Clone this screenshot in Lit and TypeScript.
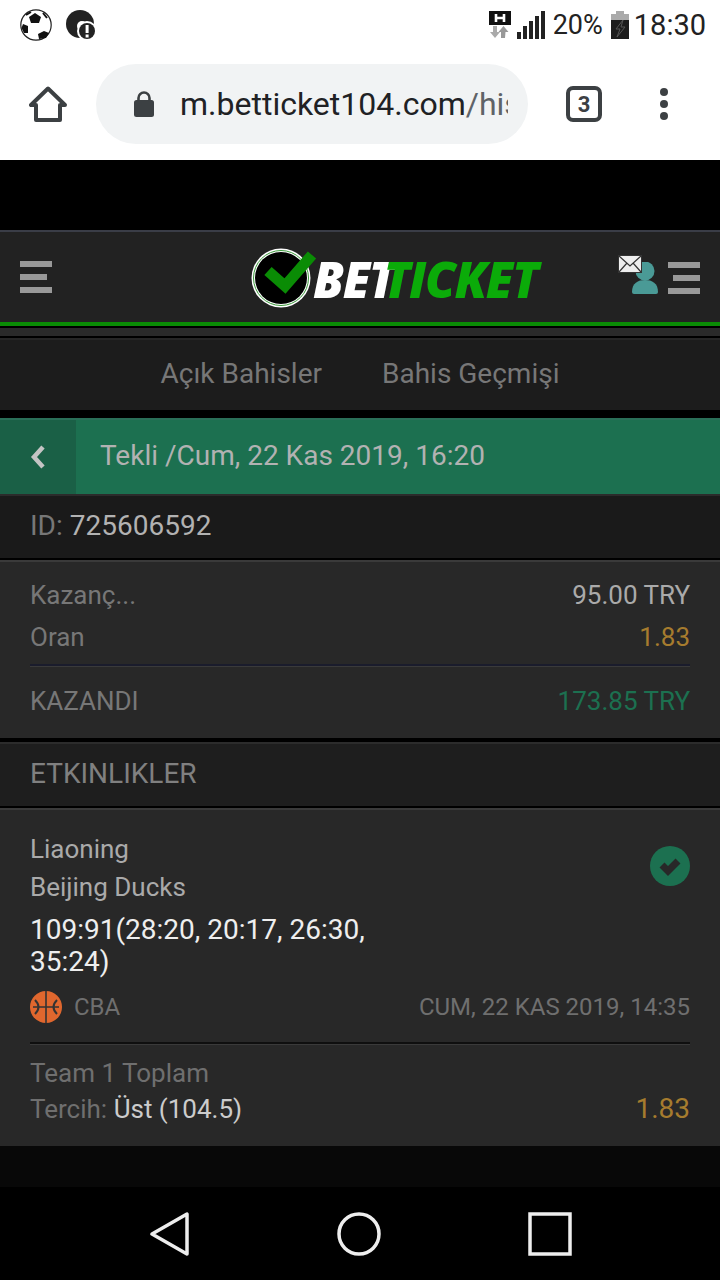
import { LitElement, html, css } from 'lit';
import { customElement } from 'lit/decorators.js';

const burger = (flip: boolean) => html`
  <svg class="burger" width="32" height="32" viewBox="0 0 32 32">
    <rect x="0" y="0" width="32" height="6" fill="#999"></rect>
    <rect x="${flip ? 5 : 0}" y="13" width="27" height="6" fill="#999"></rect>
    <rect x="0" y="26" width="32" height="6" fill="#999"></rect>
  </svg>`;

@customElement('app-root')
export class AppRoot extends LitElement {
  static styles = css`
    :host {
      display: block;
      width: 720px;
      height: 1280px;
      background: #000;
      overflow: hidden;
      font-family: Roboto, 'Liberation Sans', sans-serif;
      font-size: 26px;
      color: #777;
    }
    .status {
      height: 47px;
      padding: 1px 14px 0 20px;
      background: #fff;
      display: flex;
      align-items: center;
      color: #222;
    }
    .status .left { display: flex; gap: 14px; flex: 1; align-items: center; }
    .status .right { display: flex; align-items: center; font-size: 27px; }
    .status .pct { margin: 0 8px; }
    .status .time { margin-left: 5px; font-size: 29px; }
    .browser {
      height: 112px;
      background: #fff;
      display: flex;
      align-items: center;
    }
    .home { margin-left: 29px; width: 38px; height: 38px; }
    .url {
      margin-left: 29px;
      width: 432px;
      height: 80px;
      border-radius: 40px;
      background: #f1f3f4;
      display: flex;
      align-items: center;
      box-sizing: border-box;
      padding: 0 20px 0 37px;
    }
    .url .text {
      margin-left: 25px;
      font-size: 32px;
      color: #202124;
      white-space: nowrap;
      overflow: hidden;
      flex: 1;
    }
    .url .text span { color: #5f6368; }
    .tabs {
      margin-left: 38px;
      width: 36px;
      height: 36px;
      box-sizing: border-box;
      border: 4px solid #3c4043;
      border-radius: 7px;
      display: flex;
      align-items: center;
      justify-content: center;
      font-size: 22px;
      font-weight: 700;
      color: #3c4043;
    }
    .dots { margin-left: 58px; display: flex; flex-direction: column; gap: 4px; }
    .dots i { width: 8px; height: 8px; border-radius: 50%; background: #3c4043; display: block; }

    .gap-top { height: 70px; background: #000; }
    .topbar {
      height: 90px;
      background: #222;
      border-top: 2px solid #3a3d47;
      border-bottom: 4px solid #0a8c05;
      display: flex;
      align-items: center;
      position: relative;
    }
    .burger { display: block; }
    .topbar .l { margin-left: 20px; }
    .logo {
      position: absolute;
      left: 251px;
      top: 16px;
      display: flex;
      align-items: center;
    }
    .logo svg { overflow: visible; }
    .logo .word {
      font-family: 'Open Sans', Roboto, sans-serif;
      font-weight: 800;
      font-style: italic;
      font-size: 49px;
      line-height: 60px;
      letter-spacing: -1.4px;
      color: #0bab09;
      display: flex;
    }
    .logo .word b { color: #fff; font-weight: 800; margin-right: -11px; }
    .logo .word span { position: relative; }
    .topbar .r {
      position: absolute;
      right: 20px;
      top: 30px;
    }
    .user { position: absolute; left: 632px; top: 30px; }
    .mail { position: absolute; left: 618px; top: 23px; }

    .strip {
      height: 8px;
      background: #2a2a2a;
      border-top: 2px solid #000;
      border-bottom: 2px solid #000;
    }
    .subnav {
      height: 66px;
      padding-bottom: 4px;
      background: #1c1c1c;
      border-top: 2px solid #262626;
      display: flex;
      justify-content: center;
      align-items: center;
      gap: 60px;
      font-size: 28px;
      color: #777;
    }
    .sep8 { height: 8px; background: #000; }
    .sep4 { height: 4px; background: #000; }
    .title {
      height: 74px;
      background: #1c7050;
      border-top: 2px solid #2a6f58;
      border-bottom: 2px solid #2b2b2b;
      display: flex;
      align-items: center;
      font-size: 28px;
      color: #b2b2b2;
    }
    .title span { margin-bottom: 4px; }
    .title .back {
      width: 76px;
      height: 74px;
      background: #1a6046;
      display: flex;
      align-items: center;
      justify-content: center;
      margin-right: 24px;
    }
    .idrow {
      height: 58px;
      padding: 0 0 4px 30px;
      background: #1a1a1a;
      display: flex;
      align-items: center;
      font-size: 28px;
      border-bottom: 2px solid #000;
    }
    .idrow b { font-weight: 400; color: #b2b2b2; margin-left: 7px; }
    .summary {
      background: #282828;
      border-top: 2px solid #3a3a3a;
      padding: 0 30px;
      height: 178px;
      box-sizing: border-box;
    }
    .line {
      display: flex;
      justify-content: space-between;
      align-items: center;
      font-size: 26px;
    }
    .line .v { color: #aaa; }
    .line .gold { color: #a67c2e; }
    .line .green { color: #1c7050; }
    .summary .l1 { height: 42px; margin-top: 12px; }
    .summary .l2 { height: 42px; }
    .summary .divider { margin-top: 6px; background: #1a1c2c; }
    .divider { height: 2px; background: #0f0f0f; border-bottom: 1px solid #3a3a3a; }
    .summary .l3 { height: 68px; }
    .heading {
      height: 58px;
      padding: 0 0 4px 30px;
      background: #1e1e1e;
      border-top: 2px solid #2c2c2c;
      border-bottom: 2px solid #000;
      display: flex;
      align-items: center;
      font-size: 28px;
      color: #808080;
    }
    .event {
      background: #282828;
      border-top: 2px solid #3a3a3a;
      height: 338px;
      box-sizing: border-box;
      padding: 20px 30px 0;
      position: relative;
    }
    .team { font-size: 26px; line-height: 38px; color: #aaa; }
    .score {
      font-size: 28px;
      line-height: 32px;
      color: #eee;
      width: 370px;
      margin-top: 8px;
    }
    .check { position: absolute; right: 30px; top: 36px; }
    .meta {
      display: flex;
      align-items: center;
      margin-top: 13px;
      height: 32px;
      font-size: 24px;
      color: #6f6f6f;
    }
    .meta .cba { margin-left: 12px; flex: 1; }
    .event .divider { margin-top: 19px; }
    .market { font-size: 26px; line-height: 36px; color: #6f6f6f; margin-top: 10px; }
    .pick {
      display: flex;
      justify-content: space-between;
      align-items: center;
      font-size: 26px;
      line-height: 36px;
      color: #6f6f6f;
    }
    .pick b { font-weight: 400; color: #ccc; }
    .pick .gold { color: #a67c2e; font-size: 28px; }
    .bottom-gap { height: 41px; background: #080808; }
    .nav {
      height: 93px;
      background: #000;
      position: relative;
    }
    .nav svg { position: absolute; top: 25px; }
    .nav .tri { left: 150px; }
    .nav .circle { left: 337px; }
    .nav .square { left: 528px; }
  `;

  render() {
    return html`
      <div class="status">
        <div class="left">
          <svg width="32" height="32" viewBox="0 0 32 32">
            <circle cx="16" cy="16" r="15.2" fill="#fff" stroke="#222" stroke-width="1.2"></circle>
            <polygon points="15,4 21,8 19,14 11,14 9,8" fill="#111"></polygon>
            <polygon points="3,15 8,17 8,24 4,24 1.5,19" fill="#111"></polygon>
            <polygon points="18,25 24,22 29,24 26,29 19,30" fill="#111"></polygon>
            <path d="M11 3 L6 6 M23 4 L27 9" stroke="#111" stroke-width="2"></path>
          </svg>
          <svg width="30" height="32" viewBox="0 0 30 32">
            <circle cx="14" cy="15" r="14" fill="#222"></circle>
            <circle cx="16" cy="17" r="5" fill="#fff"></circle>
            <circle cx="21" cy="22" r="10" fill="#fff"></circle>
            <circle cx="21" cy="22" r="8" fill="#222"></circle>
            <rect x="19.6" y="16" width="3" height="8" fill="#fff"></rect>
            <rect x="19.6" y="25.5" width="3" height="3" fill="#fff"></rect>
          </svg>
        </div>
        <div class="right">
          <svg width="22" height="28" viewBox="0 0 22 28">
            <rect x="0" y="0" width="22" height="14" fill="#111"></rect>
            <path d="M7 3v8M15 3v8M7 7h8" stroke="#fff" stroke-width="2.6" fill="none"></path>
            <path d="M4 15h4v6h3l-5 6-5-6h3z" fill="#aaa"></path>
            <path d="M16 27h-4v-6H9.5l5-6 5 6h-3z" fill="#999"></path>
          </svg>
          <svg width="28" height="28" viewBox="0 0 28 28" style="margin-left:6px">
            <rect x="0" y="21" width="4" height="7" fill="#222"></rect>
            <rect x="6" y="15" width="4" height="13" fill="#222"></rect>
            <rect x="12" y="10" width="4" height="18" fill="#222"></rect>
            <rect x="18" y="5" width="4" height="23" fill="#222"></rect>
            <rect x="24" y="0" width="4" height="28" fill="#222"></rect>
          </svg>
          <span class="pct">20%</span>
          <svg width="18" height="28" viewBox="0 0 18 28">
            <rect x="5" y="0" width="8" height="3" fill="#aaa"></rect>
            <rect x="0" y="3" width="18" height="6" fill="#aaa"></rect>
            <rect x="0" y="9" width="18" height="19" fill="#1c1c1c"></rect>
            <path d="M12 9 L5 18 H9 L6 26 L14 16 H10 Z" fill="none" stroke="#555" stroke-width="1"></path>
          </svg>
          <span class="time">18:30</span>
        </div>
      </div>

      <div class="browser">
        <svg class="home" viewBox="0 0 38 38">
          <path d="M19 3.5 L2 20 H7 V35 H31 V20 H36 Z" fill="none" stroke="#3c4043" stroke-width="4" stroke-linejoin="round"></path>
        </svg>
        <div class="url">
          <svg width="22" height="26" viewBox="0 0 22 26">
            <rect x="1" y="9" width="20" height="17" rx="2.5" fill="#3c4043"></rect>
            <path d="M5.5 10 V7 a5.5 5.5 0 0 1 11 0 V10" fill="none" stroke="#3c4043" stroke-width="2.6"></path>
          </svg>
          <div class="text">m.betticket104.com<span>/history</span></div>
        </div>
        <div class="tabs">3</div>
        <div class="dots"><i></i><i></i><i></i></div>
      </div>

      <div class="gap-top"></div>

      <div class="topbar">
        <div class="l">${burger(false)}</div>
        <div class="logo">
          <svg width="62" height="62" viewBox="0 0 62 62">
            <circle cx="30" cy="30" r="29.5" fill="#fff"></circle>
            <circle cx="30" cy="30" r="27.5" fill="none" stroke="#3a9a3a" stroke-width="1"></circle>
            <circle cx="30" cy="30" r="26" fill="#000"></circle>
            <path d="M17 23 L34 38 L61 7" fill="none" stroke="#0a8c05" stroke-width="11"></path>
          </svg>
          <div class="word"><b>BET</b><span>TICKET</span></div>
        </div>
        <svg class="user" width="26" height="32" viewBox="0 0 26 32">
          <circle cx="13" cy="9" r="9.5" fill="#4a9a96"></circle>
          <path d="M0 30 C0 21 6 18 13 18 C20 18 26 21 26 30 Q26 32 24 32 H2 Q0 32 0 30 Z" fill="#4a9a96"></path>
        </svg>
        <svg class="mail" width="24" height="18" viewBox="0 0 24 18">
          <rect x="0.5" y="0.5" width="23" height="17" fill="#eee" stroke="#333"></rect>
          <path d="M1 1 L12 11 L23 1 M1 17 L9 8 M23 17 L15 8" fill="none" stroke="#333" stroke-width="1.2"></path>
        </svg>
        <div class="r">${burger(true)}</div>
      </div>
      <div class="strip"></div>

      <div class="subnav"><span>Açık Bahisler</span><span>Bahis Geçmişi</span></div>
      <div class="sep8"></div>

      <div class="title">
        <div class="back">
          <svg width="16" height="24" viewBox="0 0 16 24">
            <path d="M13 2 L4 12 L13 22" fill="none" stroke="#c4c4c4" stroke-width="4.5"></path>
          </svg>
        </div>
        <span>Tekli /Cum, 22 Kas 2019, 16:20</span>
      </div>

      <div class="idrow">ID:<b>725606592</b></div>

      <div class="summary">
        <div class="line l1"><span>Kazanç...</span><span class="v">95.00 TRY</span></div>
        <div class="line l2"><span>Oran</span><span class="gold">1.83</span></div>
        <div class="divider"></div>
        <div class="line l3"><span>KAZANDI</span><span class="green">173.85 TRY</span></div>
      </div>
      <div class="sep4"></div>

      <div class="heading">ETKINLIKLER</div>

      <div class="event">
        <div class="team">Liaoning</div>
        <div class="team">Beijing Ducks</div>
        <div class="score">109:91(28:20, 20:17, 26:30, 35:24)</div>
        <svg class="check" width="40" height="40" viewBox="0 0 40 40">
          <circle cx="20" cy="20" r="20" fill="#1c7050"></circle>
          <path d="M12 19 L18 25 L28 15" fill="none" stroke="#282828" stroke-width="7"></path>
        </svg>
        <div class="meta">
          <svg width="32" height="32" viewBox="0 0 32 32">
            <circle cx="16" cy="16" r="16" fill="#e0672e"></circle>
            <path d="M16 0 V32 M3 16 H29" fill="none" stroke="#333" stroke-width="1.6"></path>
            <path d="M5 9 Q12 16 5 23 M27 9 Q20 16 27 23" fill="none" stroke="#333" stroke-width="2"></path>
          </svg>
          <span class="cba">CBA</span>
          <span>CUM, 22 KAS 2019, 14:35</span>
        </div>
        <div class="divider"></div>
        <div class="market">Team 1 Toplam</div>
        <div class="pick"><span>Tercih: <b>Üst (104.5)</b></span><span class="gold">1.83</span></div>
      </div>

      <div class="bottom-gap"></div>

      <div class="nav">
        <svg class="tri" width="40" height="44" viewBox="0 0 40 44">
          <path d="M2 22 L37 2 V42 Z" fill="none" stroke="#eee" stroke-width="3.5" stroke-linejoin="round"></path>
        </svg>
        <svg class="circle" width="44" height="44" viewBox="0 0 44 44">
          <circle cx="22" cy="22" r="20" fill="none" stroke="#eee" stroke-width="3.5"></circle>
        </svg>
        <svg class="square" width="44" height="44" viewBox="0 0 44 44">
          <rect x="2" y="2" width="40" height="40" fill="none" stroke="#eee" stroke-width="3.5"></rect>
        </svg>
      </div>
    `;
  }
}
